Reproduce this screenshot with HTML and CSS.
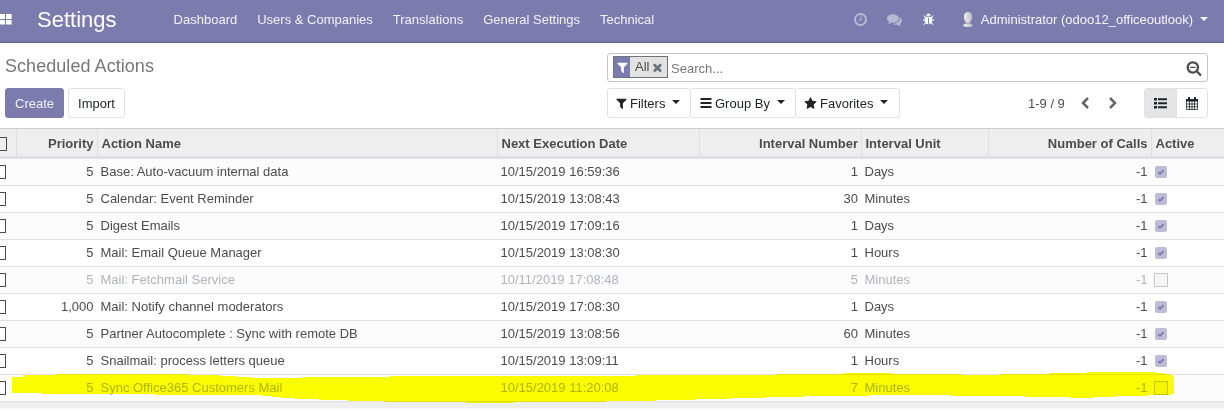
FILE: index.html
```html
<!DOCTYPE html>
<html lang="en">
<head>
<meta charset="utf-8">
<title>Scheduled Actions</title>
<link rel="stylesheet" href="styles.css">
</head>
<body>
<svg class="defs" width="0" height="0">
  <symbol id="filter" viewBox="0 0 1792 1792"><path d="M1595 295q17 41-14 70l-493 493v742q0 42-39 59-13 5-25 5-27 0-45-19l-256-256q-19-19-19-45v-486l-493-493q-31-29-14-70 17-39 59-39h1280q42 0 59 39z"/></symbol>
  <symbol id="check" viewBox="0 0 12 12"><path d="M3.200 6.200 L5 7.800 L8.600 4.300" fill="none" stroke="#7c7bad" stroke-width="1.9"/></symbol>
</svg>

<header class="navbar">
  <svg class="apps" width="12" height="11" viewBox="0 0 12 11"><path d="M0 0h5v5H0zM6 0h5.600v5H6zM0 6h5v4.600H0zM6 6h5.600v4.600H6z"/></svg>
  <span class="brand">Settings</span>
  <nav class="menu">
    <span>Dashboard</span><span>Users &amp; Companies</span><span>Translations</span><span>General Settings</span><span>Technical</span>
  </nav>
  <div class="systray">
    <svg class="dim clock" width="15" height="15" viewBox="0 0 1792 1792"><path d="M1024 544v448q0 14-9 23t-23 9h-320q-14 0-23-9t-9-23v-64q0-14 9-23t23-9h224v-352q0-14 9-23t23-9h64q14 0 23 9t9 23zm416 352q0-148-73-273t-198-198-273-73-273 73-198 198-73 273 73 273 198 198 273 73 273-73 198-198 73-273zm224 0q0 209-103 385.500t-279.500 279.500-385.500 103-385.500-103-279.500-279.500-103-385.500 103-385.500 279.500-279.500 385.500-103 385.500 103 279.500 279.500 103 385.500z"/></svg>
    <svg class="dim chat" width="15" height="15" viewBox="0 0 1792 1792"><path d="M1408 768q0 139-94 257t-256.500 186.500-353.500 68.500q-86 0-176-16-124 88-278 128-36 9-86 16h-3q-11 0-20.500-8t-11.500-21q-1-3-1-6.500t.5-6.500 2-6l2.500-5 3.500-5.500 4-5 4.500-5 4-4.500q5-6 23-25t26-29.500 22.500-29 25-38.500 20.500-44q-124-72-195-177t-71-224q0-139 94-257t256.500-186.500 353.500-68.500 353.500 68.500 256.500 186.500 94 257zm384 256q0 120-71 224.500t-195 176.500q10 24 20.500 44t25 38.500 22.500 29 26 29.500 23 25q1 1 4 4.500t4.500 5 4 5 3.500 5.500l2.500 5 2 6 .5 6.500-1 6.500q-3 14-13 22t-22 7q-50-7-86-16-154-40-278-128-90 16-176 16-271 0-472-132 58 4 88 4 161 0 309-45t264-129q125-92 192-212t67-254q0-77-23-152 129 71 204 178t75 230z"/></svg>
    <svg class="bug" width="13" height="13" viewBox="0 0 1792 1792"><path d="M1696 960q0 26-19 45t-45 19h-224q0 171-67 290l208 209q19 19 19 45t-19 45q-18 19-45 19t-45-19l-198-197q-5 5-15 13t-42 28.500-65 36.500-82 29-97 13v-896h-128v896q-51 0-101.500-13.500t-87-33-66-39-43.500-32.500l-15-14-183 207q-20 21-48 21-24 0-43-16-19-18-20.500-44.500t15.500-46.500l202-227q-58-114-58-274h-224q-26 0-45-19t-19-45 19-45 45-19h224v-294l-173-173q-19-19-19-45t19-45 45-19 45 19l173 173h844l173-173q19-19 45-19t45 19 19 45-19 45l-173 173v294h224q26 0 45 19t19 45zm-480-576h-640q0-133 93.500-226.500t226.500-93.500 226.500 93.500 93.500 226.500z"/></svg>
    <svg class="avatar" width="10" height="15" viewBox="0 0 10 15">
      <defs><linearGradient id="g"><stop offset="0" stop-color="#f4f4f4"/><stop offset="1" stop-color="#b9b9b9"/></linearGradient></defs>
      <path fill="url(#g)" d="M5 0C7.500 0 9.300 1.800 9.200 4.500 9.100 7.500 8 9.300 6.800 10.300V11.500C8.500 11.800 9.800 12.400 9.800 13.400 9.500 14.600 7 15 5 15S.5 14.600.2 13.400C.2 12.400 1.500 11.800 3.200 11.500V10.300C2 9.300 1 7.500.9 4.500.8 1.800 2.500 0 5 0Z"/>
      <path fill="#a9a9b4" d="M3.200 10.300C4.200 11.200 5.800 11.200 6.800 10.300V11.600C5.800 12.300 4.200 12.300 3.200 11.600Z"/>
    </svg>
    <span>Administrator (odoo12_officeoutlook)</span>
    <i class="caret"></i>
  </div>
</header>

<section class="panel">
  <div class="left">
    <h1>Scheduled Actions</h1>
    <div class="buttons"><span class="btn primary">Create</span><span class="btn">Import</span></div>
  </div>
  <div class="right">
    <div class="search">
      <div class="facet">
        <span class="facet-icon"><svg width="13" height="13"><use href="#filter"/></svg></span>
        <span class="facet-label">All</span>
        <svg class="close" width="13" height="13" viewBox="0 0 1792 1792"><path d="M1490 1322q0 40-28 68l-136 136q-28 28-68 28t-68-28l-294-294-294 294q-28 28-68 28t-68-28l-136-136q-28-28-28-68t28-68l294-294-294-294q-28-28-28-68t28-68l136-136q28-28 68-28t68 28l294 294 294-294q28-28 68-28t68 28l136 136q28 28 28 68t-28 68l-294 294 294 294q28 28 28 68z"/></svg>
      </div>
      <span class="placeholder">Search...</span>
      <svg class="zoom" width="16" height="16" viewBox="0 0 1792 1792"><path d="M1088 800v64q0 13-9.500 22.500t-22.500 9.500h-576q-13 0-22.500-9.500t-9.500-22.500v-64q0-13 9.500-22.500t22.500-9.500h576q13 0 22.500 9.500t9.500 22.500zm128 32q0-185-131.500-316.500t-316.500-131.500-316.500 131.500-131.500 316.500 131.500 316.500 316.500 131.500 316.500-131.500 131.500-316.500zm512 832q0 53-37.500 90.500t-90.500 37.500q-54 0-90-38l-343-342q-179 124-399 124-143 0-273.500-55.500t-225-150-150-225-55.500-273.500 55.500-273.500 150-225 225-150 273.500-55.500 273.500 55.500 225 150 150 225 55.500 273.500q0 220-124 399l343 343q37 37 37 90z"/></svg>
    </div>
    <div class="tools">
      <span class="btn drop filters"><svg width="13" height="13"><use href="#filter"/></svg>Filters<i class="caret"></i></span>
      <span class="btn drop group"><svg width="12" height="12" viewBox="0 0 12 12"><path d="M0.500 1h11v2H.5zM.5 5h11v2H.5zM.5 9h11v2H.5z"/></svg>Group By<i class="caret"></i></span>
      <span class="btn drop favs"><svg width="13" height="13" viewBox="0 0 1792 1792"><path d="M1728 647q0 22-26 48l-363 354 86 500q1 7 1 20 0 21-10.500 35.500t-30.500 14.500q-19 0-40-12l-449-236-449 236q-22 12-40 12-21 0-31.500-14.500t-10.500-35.500q0-6 2-20l86-500-364-354q-25-27-25-48 0-37 56-46l502-73 225-455q19-41 49-41t49 41l225 455 502 73q56 9 56 46z"/></svg>Favorites<i class="caret"></i></span>
      <span class="pager">1-9 / 9</span>
      <svg class="chev" width="8" height="12" viewBox="0 0 8 12"><path d="M7 1 2 6l5 5"/></svg>
      <svg class="chev next" width="8" height="12" viewBox="0 0 8 12"><path d="m1 1 5 5-5 5"/></svg>
      <div class="views">
        <span class="view on"><svg width="13" height="11" viewBox="0 0 13 11"><path d="M0 0h3v2.500H0zM4 .3h9v2H4zM0 4h3v2.500H0zM4 4.300h9v2H4zM0 8h3v2.500H0zM4 8.300h9v2H4z"/></svg></span>
        <span class="view"><svg width="12" height="13" viewBox="0 0 12 13"><path d="M2 0h2v3.500H2zM8 0h2v3.500H8zM0 2h12v2.500H0z"/><path d="M.5 4v8.500h11V4M3.500 4v8.500M6 4v8.500M8.500 4v8.500M.5 7h11M.5 9.800h11" fill="none" stroke="currentColor" stroke-width=".8"/></svg></span>
      </div>
    </div>
  </div>
</section>

<main class="list">
  <div class="row head"><span class="sel"><i></i></span><span class="num">Priority</span><span>Action Name</span><span>Next Execution Date</span><span class="num">Interval Number</span><span>Interval Unit</span><span class="num">Number of Calls</span><span>Active</span></div>
  <div class="row"><span class="sel"><i></i></span><span class="num">5</span><span>Base: Auto-vacuum internal data</span><span>10/15/2019 16:59:36</span><span class="num">1</span><span>Days</span><span class="num">-1</span><span class="act"><svg class="box"><use href="#check"/></svg></span></div>
  <div class="row"><span class="sel"><i></i></span><span class="num">5</span><span>Calendar: Event Reminder</span><span>10/15/2019 13:08:43</span><span class="num">30</span><span>Minutes</span><span class="num">-1</span><span class="act"><svg class="box"><use href="#check"/></svg></span></div>
  <div class="row"><span class="sel"><i></i></span><span class="num">5</span><span>Digest Emails</span><span>10/15/2019 17:09:16</span><span class="num">1</span><span>Days</span><span class="num">-1</span><span class="act"><svg class="box"><use href="#check"/></svg></span></div>
  <div class="row"><span class="sel"><i></i></span><span class="num">5</span><span>Mail: Email Queue Manager</span><span>10/15/2019 13:08:30</span><span class="num">1</span><span>Hours</span><span class="num">-1</span><span class="act"><svg class="box"><use href="#check"/></svg></span></div>
  <div class="row muted"><span class="sel"><i></i></span><span class="num">5</span><span>Mail: Fetchmail Service</span><span>10/11/2019 17:08:48</span><span class="num">5</span><span>Minutes</span><span class="num">-1</span><span class="act"><i class="empty"></i></span></div>
  <div class="row"><span class="sel"><i></i></span><span class="num">1,000</span><span>Mail: Notify channel moderators</span><span>10/15/2019 17:08:30</span><span class="num">1</span><span>Days</span><span class="num">-1</span><span class="act"><svg class="box"><use href="#check"/></svg></span></div>
  <div class="row"><span class="sel"><i></i></span><span class="num">5</span><span>Partner Autocomplete : Sync with remote DB</span><span>10/15/2019 13:08:56</span><span class="num">60</span><span>Minutes</span><span class="num">-1</span><span class="act"><svg class="box"><use href="#check"/></svg></span></div>
  <div class="row"><span class="sel"><i></i></span><span class="num">5</span><span>Snailmail: process letters queue</span><span>10/15/2019 13:09:11</span><span class="num">1</span><span>Hours</span><span class="num">-1</span><span class="act"><svg class="box"><use href="#check"/></svg></span></div>
  <div class="row muted"><span class="sel"><i></i></span><span class="num">5</span><span>Sync Office365 Customers Mail</span><span>10/15/2019 11:20:08</span><span class="num">7</span><span>Minutes</span><span class="num">-1</span><span class="act"><i class="empty"></i></span></div>
  <div class="foot"></div>
  <!-- Marker stroke over the last row -->
  <svg class="marker" width="1224" height="32" viewBox="0 372 1224 32" shape-rendering="crispEdges"><path d="M12 377H24V375H56V374H188V375H220V376H237V377H252V378H303V377H390V376H636V375H777V374H844V373H892V374H962V375H1001V374H1050V373H1087V372H1156V373H1165V374H1170V375H1173V377H1174V394H1171V395H1148V396H1116V397H1092V398H1070V397H1025V396H951V395H869V396H804V397H765V398H731V399H696V400H656V401H606V402H513V403H466V402H385V401H348V400H319V399H295V398H281V397H272V396H262V395H155V394H42V393H12Z"/></svg>
</main>
</body>
</html>
```
FILE: styles.css
```css
* { box-sizing: border-box; }
body {
  margin: 0;
  height: 410px;
  overflow: hidden;
  background: #f9f9f9;
  color: #4c4c4c;
  font: 13px/20px "Liberation Sans", Arial, sans-serif;
}
svg { display: block; flex: none; fill: currentColor; }
.defs { position: absolute; }
.caret {
  flex: none;
  width: 0;
  height: 0;
  border: 4px solid transparent;
  border-top-color: currentColor;
  border-bottom: 0;
}

/* Navigation bar */
.navbar {
  display: flex;
  align-items: center;
  height: 43px;
  padding-right: 16px;
  background: #7c7bad;
  border-bottom: 1px solid #5f5e97;
  color: #fff;
  white-space: nowrap;
}
.apps { margin-top: -4px; }
.brand { width: 126.6px; margin-left: 25px; font-size: 22px; line-height: 40px; margin-top: -2px; }
.menu { display: flex; margin-top: -2px; color: #f1f1f7; }
.menu span { padding: 0 10px; }
.systray { display: flex; align-items: center; margin-left: auto; margin-top: -2px; color: #f5f5fa; }
.dim { opacity: .5; }
.clock { margin-right: 19px; margin-top: -2px; }
.chat { margin-right: 20px; margin-top: -2px; }
.bug { margin-right: 28px; margin-top: -1px; color: #fff; }
.avatar { margin-right: 8px; margin-top: -1px; }
.systray .caret { margin-left: 7px; margin-top: -2px; }

/* Control panel */
.panel {
  display: flex;
  justify-content: space-between;
  height: 86px;
  padding: 10px 16px 0 5px;
  background: #fff;
  border-bottom: 1px solid #cacaca;
}
h1 { margin: 0 0 9px; font-size: 18px; letter-spacing: .05px; font-weight: 400; line-height: 26px; color: #777; }
.buttons { display: flex; gap: 4px; }
.btn {
  display: flex;
  align-items: center;
  height: 30px;
  padding: 2px 9px 0;
  border: 1px solid #dee2e6;
  border-radius: 3px;
  background: #fff;
  color: #212529;
}
.primary { background: #7c7bad; border-color: #7c7bad; color: #f1f1f7; }
.right { width: 601px; }
.search {
  display: flex;
  align-items: center;
  height: 29px;
  margin-bottom: 6px;
  padding: 0 5px;
  border: 1px solid #c4c4c8;
  border-radius: 3px;
}
.facet {
  display: flex;
  align-items: center;
  width: 55px;
  height: 22px;
  margin-top: -1px;
  border: 1px solid #6c757d;
  background: #e2e2e0;
}
.facet-icon { display: flex; align-items: center; justify-content: center; width: 16px; height: 20px; background: #7c7bad; color: #fff; }
.facet-icon svg { margin-top: 1px; }
.facet-label { width: 17px; margin-left: 5px; margin-top: -1px; }
.close { color: #6c757d; margin-top: 1px; margin-left: -1px; }
.placeholder { margin-left: 3px; padding-top: 2px; color: #777; }
.zoom { margin-left: auto; margin-top: 1px; }
.tools { display: flex; align-items: center; }
.drop { margin-right: -1px; padding: 2px 0 0 7px; white-space: nowrap; }
.drop svg { margin-right: 2px; margin-top: -2px; }
.drop .caret { margin-left: 7px; margin-top: -5px; }
.filters { width: 84px; }
.group { width: 106px; padding-left: 9px; }
.group svg { margin-right: 3px; }
.favs { width: 105px; padding-left: 8px; }
.favs svg { margin-right: 3px; }
.pager { width: 51px; margin-left: 129px; padding-top: 2px; }
.chev { margin-left: 2px; margin-top: 0; fill: none; stroke: #666; stroke-width: 2.5; }
.next { margin-left: 20px; }
.views { display: flex; margin-left: auto; border: 1px solid #dee2e6; border-radius: 3px; overflow: hidden; color: #212529; }
.view { display: flex; align-items: center; justify-content: center; width: 30px; height: 28px; }
.on { width: 32px; background: #e5e5e5; border-right: 1px solid #dee2e6; }

/* Record list */
.list { position: relative; }
.row {
  display: grid;
  grid-template-columns: 16px 81px 400px 202px 162px 127px 163px 1fr;
  height: 27px;
  border-bottom: 1px solid #dee2e6;
  background: #fff;
  line-height: 26px;
  white-space: nowrap;
}
.row:nth-child(even) { background: #fcfcfc; }
.row > span { padding: 0 3px 0 3.5px; }
.row > .num { padding-right: 3.5px; text-align: right; }
.head { height: 30px; border-bottom: 3px solid #dee2e6; background: #eee; font-weight: 700; line-height: 29px; }
.head > span + span { border-left: 1px solid #dfdfdf; }
.row > .sel { display: flex; align-items: center; padding: 0; }
.sel i { width: 6px; height: 14px; border: 1px solid #4c4c4c; border-left: 0; background: #fff; }
.head .sel i { width: 7px; margin-top: 0; background: none; }
.row > .act { display: flex; align-items: center; padding-left: 4px; }
.box { width: 12px; height: 12px; border-radius: 2px; background: #bdbcd6; }
.empty { width: 14px; height: 14px; margin-left: -1px; border: 1px solid #c6c6c6; background: #f5f5f5; }
.muted { color: #adb5bd; }
.row > span:nth-child(5) { padding-right: 3px; }
.foot { height: 6px; background: #eee; }
.marker { position: absolute; left: 0; top: 243px; fill: #ff0; mix-blend-mode: multiply; pointer-events: none; }
```
